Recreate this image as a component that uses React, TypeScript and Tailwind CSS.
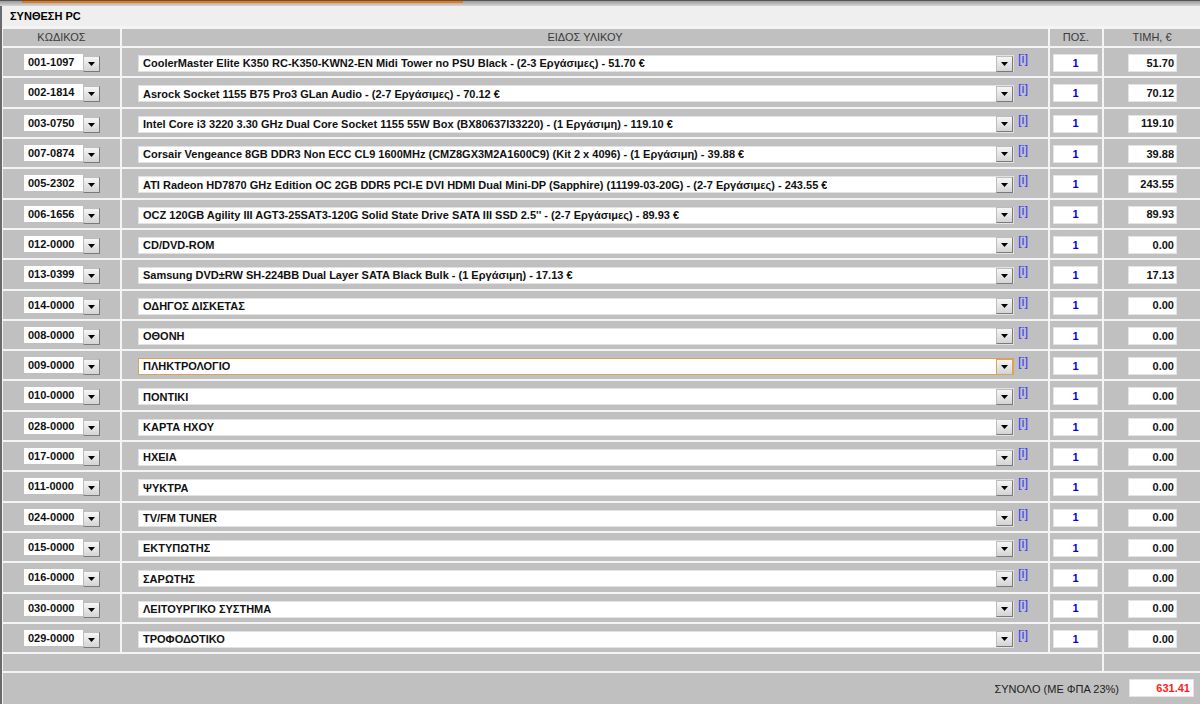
const rows: { code: string; name: string; price: string }[] = [
  { code: '001-1097', name: 'CoolerMaster Elite K350 RC-K350-KWN2-EN Midi Tower no PSU Black - (2-3 Εργάσιμες) - 51.70 €', price: '51.70' },
  { code: '002-1814', name: 'Asrock Socket 1155 B75 Pro3 GLan Audio - (2-7 Εργάσιμες) - 70.12 €', price: '70.12' },
  { code: '003-0750', name: 'Intel Core i3 3220 3.30 GHz Dual Core Socket 1155 55W Box (BX80637I33220) - (1 Εργάσιμη) - 119.10 €', price: '119.10' },
  { code: '007-0874', name: 'Corsair Vengeance 8GB DDR3 Non ECC CL9 1600MHz (CMZ8GX3M2A1600C9) (Kit 2 x 4096) - (1 Εργάσιμη) - 39.88 €', price: '39.88' },
  { code: '005-2302', name: 'ATI Radeon HD7870 GHz Edition OC 2GB DDR5 PCI-E DVI HDMI Dual Mini-DP (Sapphire) (11199-03-20G) - (2-7 Εργάσιμες) - 243.55 €', price: '243.55' },
  { code: '006-1656', name: "OCZ 120GB Agility III AGT3-25SAT3-120G Solid State Drive SATA III SSD 2.5'' - (2-7 Εργάσιμες) - 89.93 €", price: '89.93' },
  { code: '012-0000', name: 'CD/DVD-ROM', price: '0.00' },
  { code: '013-0399', name: 'Samsung DVD±RW SH-224BB Dual Layer SATA Black Bulk - (1 Εργάσιμη) - 17.13 €', price: '17.13' },
  { code: '014-0000', name: 'ΟΔΗΓΟΣ ΔΙΣΚΕΤΑΣ', price: '0.00' },
  { code: '008-0000', name: 'ΟΘΟΝΗ', price: '0.00' },
  { code: '009-0000', name: 'ΠΛΗΚΤΡΟΛΟΓΙΟ', price: '0.00' },
  { code: '010-0000', name: 'ΠΟΝΤΙΚΙ', price: '0.00' },
  { code: '028-0000', name: 'ΚΑΡΤΑ ΗΧΟΥ', price: '0.00' },
  { code: '017-0000', name: 'ΗΧΕΙΑ', price: '0.00' },
  { code: '011-0000', name: 'ΨΥΚΤΡΑ', price: '0.00' },
  { code: '024-0000', name: 'TV/FM TUNER', price: '0.00' },
  { code: '015-0000', name: 'ΕΚΤΥΠΩΤΗΣ', price: '0.00' },
  { code: '016-0000', name: 'ΣΑΡΩΤΗΣ', price: '0.00' },
  { code: '030-0000', name: 'ΛΕΙΤΟΥΡΓΙΚΟ ΣΥΣΤΗΜΑ', price: '0.00' },
  { code: '029-0000', name: 'ΤΡΟΦΟΔΟΤΙΚΟ', price: '0.00' },
];

const FOCUSED = 10;

function DropButton({ focused }: { focused?: boolean }) {
  return (
    <div
      className={`w-[17px] h-[16px] flex items-center justify-center border bg-gradient-to-b from-[#f6f6f6] to-[#d4d4d4] ${
        focused ? 'border-[#d9a45a]' : 'border-t-[#bdbdbd] border-l-[#bdbdbd] border-r-[#7a7a7a] border-b-[#7a7a7a]'
      }`}
    >
      <svg width="7" height="4" viewBox="0 0 7 4">
        <path d="M0 0h7L3.5 4z" fill="#000" />
      </svg>
    </div>
  );
}

export default function App() {
  return (
    <div className="w-[1200px] h-[704px] overflow-hidden bg-[#f4f4f4] text-[11px] font-['Tahoma','Liberation_Sans',sans-serif]">
      {/* top strip */}
      <div className="h-[6px] bg-gradient-to-b from-[#9a9a9a] to-[#d6d6d6] flex border-t border-[#555]">
        <div className="w-[22px]" />
        <div className="w-[441px] h-[2px] bg-[#e87a10]" />
      </div>

      <div className="border-l-2 border-[#6a6a6a] h-full">
        {/* title */}
        <div className="h-[20px] bg-[#efefef] pl-[8px] flex items-center font-bold text-black">ΣΥΝΘΕΣΗ PC</div>

        <div className="pt-[3px] pl-[1px] grid grid-cols-[117px_926px_52px_1fr] gap-[2px] bg-[#f4f4f4]">
          {/* header */}
          <div className="h-[17px] bg-[#c0c0c0] flex items-center justify-center text-[#3a3a3a]">ΚΩΔΙΚΟΣ</div>
          <div className="h-[17px] bg-[#c0c0c0] flex items-center justify-center text-[#3a3a3a]">ΕΙΔΟΣ ΥΛΙΚΟΥ</div>
          <div className="h-[17px] bg-[#c0c0c0] flex items-center justify-center text-[#3a3a3a]">ΠΟΣ.</div>
          <div className="h-[17px] bg-[#c0c0c0] flex items-center justify-center text-[#3a3a3a]">ΤΙΜΗ, €</div>

          {rows.map((r, i) => {
            const focused = i === FOCUSED;
            return (
              <div key={r.code} className="contents">
                <div className="h-[28.32px] bg-[#c0c0c0] flex items-start pl-[21px] pt-[6px]">
                  <div className="w-[59px] h-[16px] bg-white pl-[4px] leading-[16px] font-bold text-[#111]">{r.code}</div>
                  <div className="mt-[2px]">
                    <DropButton />
                  </div>
                </div>
                <div className="h-[28.32px] bg-[#c0c0c0] flex items-start pl-[16px] pt-[7px]">
                  <div
                    className={`w-[876px] h-[17px] bg-white border flex items-center justify-between ${
                      focused ? 'border-[#d9a45a]' : 'border-[#e2e2e2]'
                    }`}
                  >
                    <span className="pl-[4px] font-bold text-[#111] whitespace-nowrap overflow-hidden">{r.name}</span>
                    <DropButton focused={focused} />
                  </div>
                  <span className="ml-[4px] -mt-[5px] text-[13px] leading-[18px] text-[#3b3bff]">[i]</span>
                </div>
                <div className="h-[28.32px] bg-[#c0c0c0] pl-[3px] pt-[6px]">
                  <div className="w-[45px] h-[18px] bg-white border border-[#e4e4e4] flex items-center justify-center font-bold text-[#0000ee]">1</div>
                </div>
                <div className="h-[28.32px] bg-[#c0c0c0] pl-[24px] pt-[6px]">
                  <div className="w-[49px] h-[18px] bg-white border border-[#e4e4e4] flex items-center justify-end pr-[2px] font-bold text-[#111]">{r.price}</div>
                </div>
              </div>
            );
          })}

          {/* spacer row */}
          <div className="col-span-3 h-[17px] bg-[#c0c0c0]" />
          <div className="h-[17px] bg-[#c0c0c0]" />

          {/* total */}
          <div className="col-span-4 h-[40px] bg-[#c0c0c0] flex items-start justify-end pt-[6px] pr-[6px]">
            <span className="mt-[2px] mr-[10px] text-[#222]">ΣΥΝΟΛΟ (ΜΕ ΦΠΑ 23%)</span>
            <div className="w-[65px] h-[18px] bg-white border border-[#e4e4e4] flex items-center justify-end pr-[3px] font-bold text-[#ff2020]">631.41</div>
          </div>
        </div>
      </div>
    </div>
  );
}
